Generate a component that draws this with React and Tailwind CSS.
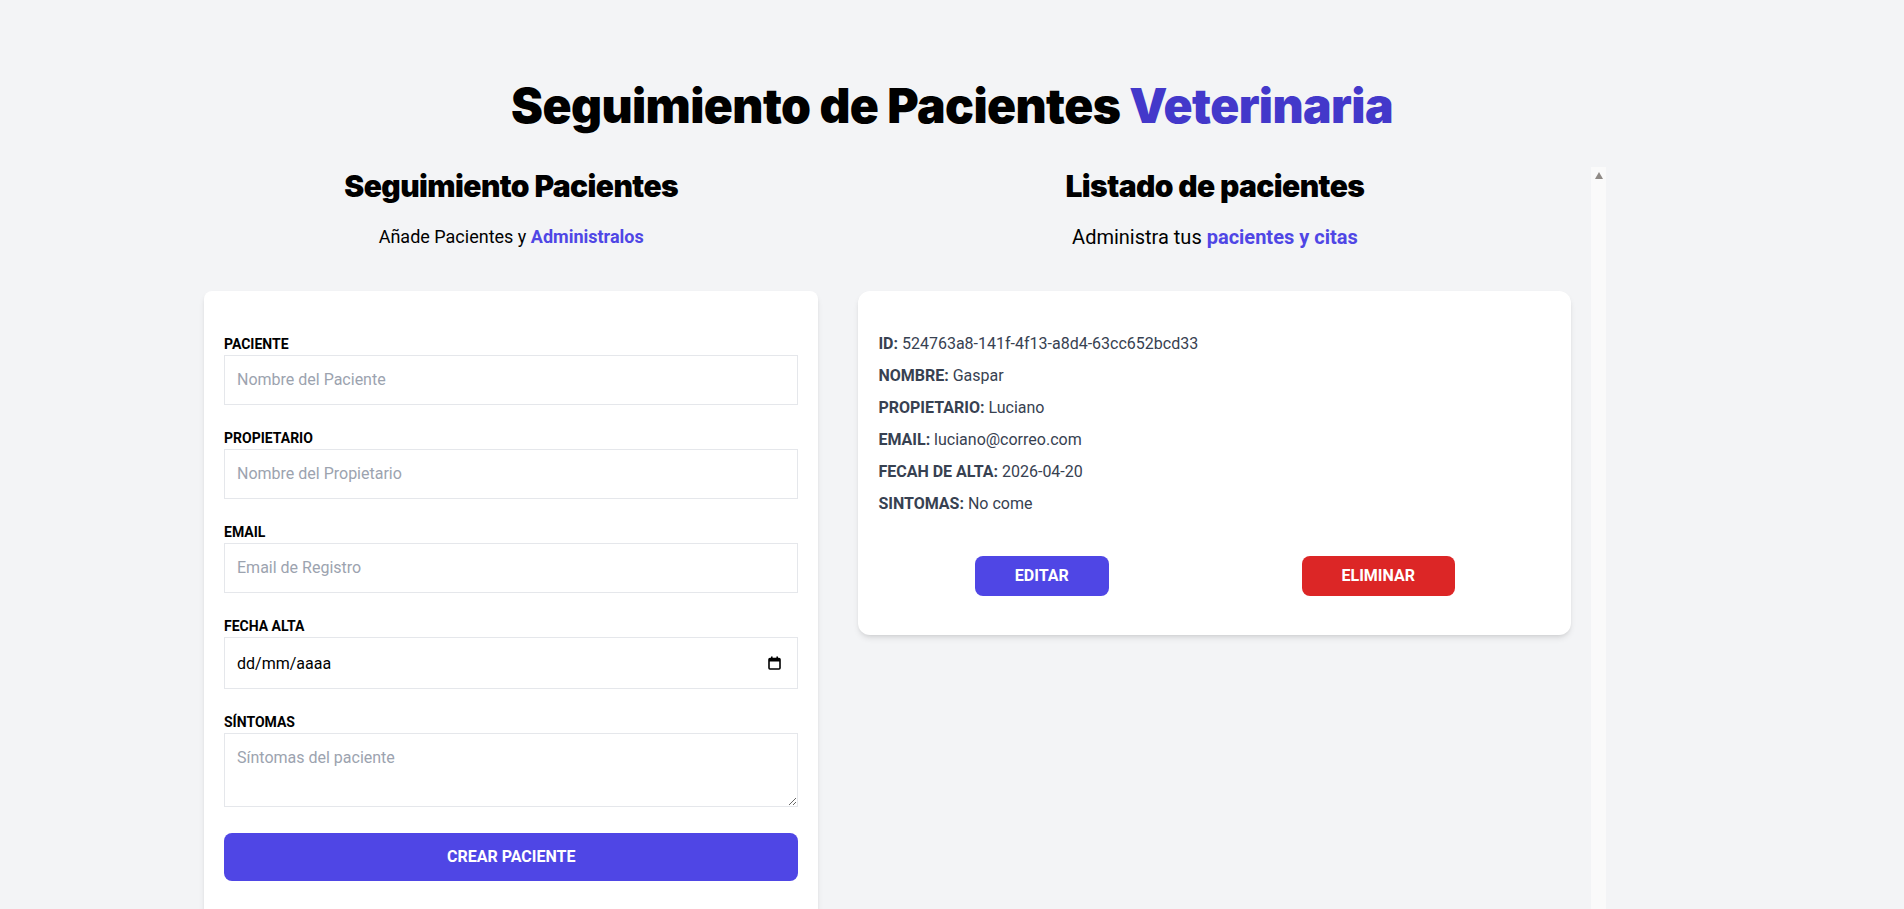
import React from "react";

function CalendarIcon() {
  return (
    <svg width="13" height="14" viewBox="0 0 13 14" aria-hidden="true">
      <rect x="1" y="2.5" width="11" height="10.5" rx="1" fill="none" stroke="#000" strokeWidth="1.6" />
      <rect x="1" y="2.5" width="11" height="3" fill="#000" />
      <rect x="3" y="0.5" width="1.6" height="3" fill="#000" />
      <rect x="8.4" y="0.5" width="1.6" height="3" fill="#000" />
    </svg>
  );
}

function Field({ label, children, last }) {
  return (
    <div className={last ? "mb-[26px]" : "mb-5"}>
      <label className="block text-sm leading-6 font-bold text-black uppercase pt-px -mb-px">{label}</label>
      {children}
    </div>
  );
}

function Dato({ label, value }) {
  return (
    <p className="font-bold mb-2 text-[#374151] uppercase">
      {label}: <span className="font-normal normal-case">{value}</span>
    </p>
  );
}

export default function App() {
  const inputCls =
    "block w-full border border-[#e5e7eb] p-3 text-base leading-6 placeholder-[#9ca3af] outline-none bg-white";
  const headingFont = { fontFamily: "Inter, sans-serif" };
  return (
    <div className="min-h-screen bg-[#f3f4f6] text-black" style={{ fontFamily: "Roboto, 'Open Sans', sans-serif" }}>
      <div className="container mx-auto pt-[82px]">
        <h1 className="font-black text-5xl text-center tracking-[-0.6px]" style={headingFont}>
          Seguimiento de Pacientes <span className="text-[#4338ca]">Veterinaria</span>
        </h1>

        <div className="mt-[37px] flex">
          <div className="w-2/5 mx-5">
            <h2 className="font-black text-3xl text-center tracking-[-0.6px] pt-px -mb-px" style={headingFont}>
              Seguimiento Pacientes
            </h2>
            <p className="text-lg leading-7 mt-5 mb-10 text-center">
              Añade Pacientes y <span className="text-[#4f46e5] font-bold">Administralos</span>
            </p>

            <form className="bg-white shadow-md rounded-lg py-10 px-5 mb-10">
              <Field label="Paciente">
                <input type="text" placeholder="Nombre del Paciente" className={inputCls} />
              </Field>
              <Field label="Propietario">
                <input type="text" placeholder="Nombre del Propietario" className={inputCls} />
              </Field>
              <Field label="Email">
                <input type="email" placeholder="Email de Registro" className={inputCls} />
              </Field>
              <Field label="Fecha Alta">
                <div className="relative">
                  <input
                    type="text"
                    placeholder="dd/mm/aaaa"
                    className="block w-full h-[52px] border border-[#e5e7eb] px-3 text-base placeholder-black outline-none bg-white"
                  />
                  <span className="absolute right-[17px] top-[19px] pointer-events-none">
                    <CalendarIcon />
                  </span>
                </div>
              </Field>
              <Field label="Síntomas" last>
                <textarea rows={2} placeholder="Síntomas del paciente" className={inputCls + " h-[74px]"} />
              </Field>
              <button
                type="button"
                className="w-full bg-[#4f46e5] py-3 text-white font-bold uppercase rounded-lg text-base leading-6"
              >
                Crear Paciente
              </button>
            </form>
          </div>

          <div className="w-1/2 h-screen flex">
            <div className="flex-1 min-w-0 overflow-y-auto">
              <h2 className="font-black text-3xl text-center tracking-[-0.6px] pt-px -mb-px" style={headingFont}>
                Listado de pacientes
              </h2>
              <p className="text-xl leading-7 mt-5 mb-10 text-center">
                Administra tus <span className="text-[#4f46e5] font-bold">pacientes y citas</span>
              </p>

              <div className="mx-5 my-10 bg-white shadow-md px-5 pt-[41px] pb-[39px] rounded-xl">
                <Dato label="ID" value="524763a8-141f-4f13-a8d4-63cc652bcd33" />
                <Dato label="Nombre" value="Gaspar" />
                <Dato label="Propietario" value="Luciano" />
                <Dato label="Email" value="luciano@correo.com" />
                <Dato label="Fecah de alta" value="2026-04-20" />
                <Dato label="Sintomas" value="No come" />

                <div className="flex justify-around mt-10">
                  <button type="button" className="py-2 px-10 bg-[#4f46e5] text-white font-bold uppercase rounded-lg">
                    Editar
                  </button>
                  <button type="button" className="py-2 px-10 bg-[#dc2626] text-white font-bold uppercase rounded-lg">
                    Eliminar
                  </button>
                </div>
              </div>
            </div>
            <div className="w-[15px] shrink-0 bg-[#fafafa] flex justify-center pt-[5px]" aria-hidden="true">
              <svg width="8" height="7" viewBox="0 0 8 7">
                <polygon points="4,0 8,7 0,7" fill="#8f8a86" />
              </svg>
            </div>
          </div>
        </div>
      </div>
    </div>
  );
}
